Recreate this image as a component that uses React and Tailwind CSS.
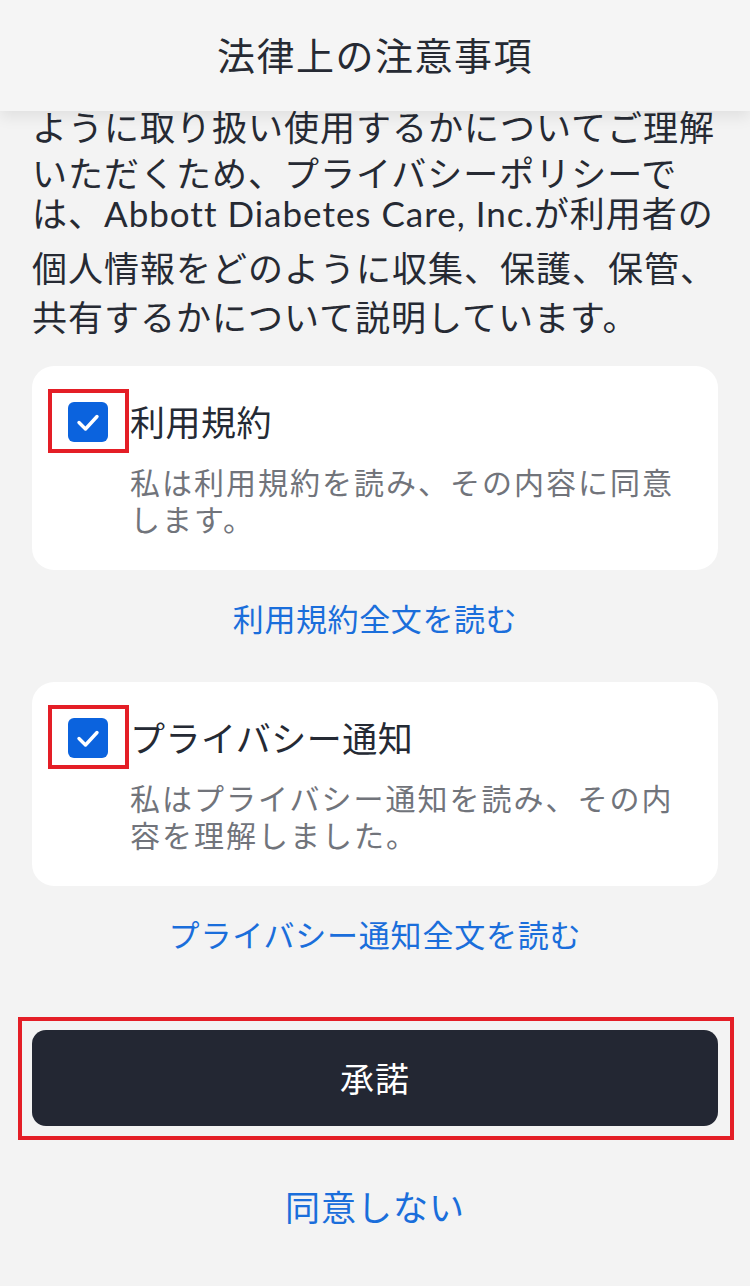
const font = "font-['Lato','Noto_Sans_CJK_JP',sans-serif]";

const CheckBox = () => (
  <div className="relative shrink-0">
    <div className="w-10 h-10 rounded-[6px] bg-[#0b63de] flex items-center justify-center">
      <svg width="40" height="40" viewBox="0 0 40 40" fill="none">
        <path
          d="M11 20.5 L17.5 27 L29 14.5"
          stroke="white"
          strokeWidth="3.4"
          strokeLinecap="round"
          strokeLinejoin="round"
        />
      </svg>
    </div>
    <div className="absolute -left-[20px] -top-[13px] w-[81px] h-[64px] border-4 border-[#e41e26] pointer-events-none" />
  </div>
);

const ConsentCard = ({ title, lines }) => (
  <div className="bg-white rounded-[22px] h-[204px] px-9 pt-9">
    <div className="flex items-center gap-[22px] h-10">
      <CheckBox />
      <p className="text-[35px] leading-10 text-[#252a34] tracking-[0.5px]">{title}</p>
    </div>
    <div className="pl-[62px] mt-[22px] text-[30px] leading-[37px] text-[#71747b] tracking-[2px]">
      {lines.map((l, i) => (
        <p key={i}>{l}</p>
      ))}
    </div>
  </div>
);

export default function App() {
  return (
    <div className={`w-full min-h-[1286px] bg-[#f3f3f3] ${font}`}>
      <header className="relative z-10 h-[111px] bg-[#f5f5f5] shadow-[0_6px_14px_rgba(0,0,0,0.08)] flex items-center justify-center">
        <h1 className="text-[38px] text-[#262a33] tracking-[1.5px]">法律上の注意事項</h1>
      </header>

      <main className="px-8">
        <div className="-mt-[7px] text-[35px] leading-[46px] text-[#262a33] tracking-[1px]">
          <p>ように取り扱い使用するかについてご理解</p>
          <p>いただくため、プライバシーポリシーで</p>
          <p className="-mt-[6px] mb-[9px]">は、Abbott Diabetes Care, Inc.が利用者の</p>
          <p>個人情報をどのように収集、保護、保管、</p>
          <p className="mt-[3px]">共有するかについて説明しています。</p>
        </div>

        <div className="mt-[26px]">
          <ConsentCard
            title="利用規約"
            lines={["私は利用規約を読み、その内容に同意", "します。"]}
          />
        </div>
        <p className="mt-[29px] text-center text-[31px] leading-10 text-[#1a6edb] tracking-[0.6px]">
          利用規約全文を読む
        </p>

        <div className="mt-[43px]">
          <ConsentCard
            title="プライバシー通知"
            lines={["私はプライバシー通知を読み、その内", "容を理解しました。"]}
          />
        </div>
        <p className="mt-[29px] text-center text-[31px] leading-10 text-[#1a6edb] tracking-[0.8px]">
          プライバシー通知全文を読む
        </p>

        <div className="relative mt-[75px]">
          <button className="w-full h-[96px] rounded-[14px] bg-[#232733] text-white text-[34px] tracking-[1px]">
            承諾
          </button>
          <div className="absolute -left-[14px] -right-[16px] -top-[13px] -bottom-[14px] border-4 border-[#e41e26] pointer-events-none" />
        </div>

        <p className="mt-[59px] text-center text-[35px] leading-[44px] text-[#1a6edb] tracking-[1px]">
          同意しない
        </p>
      </main>
    </div>
  );
}
